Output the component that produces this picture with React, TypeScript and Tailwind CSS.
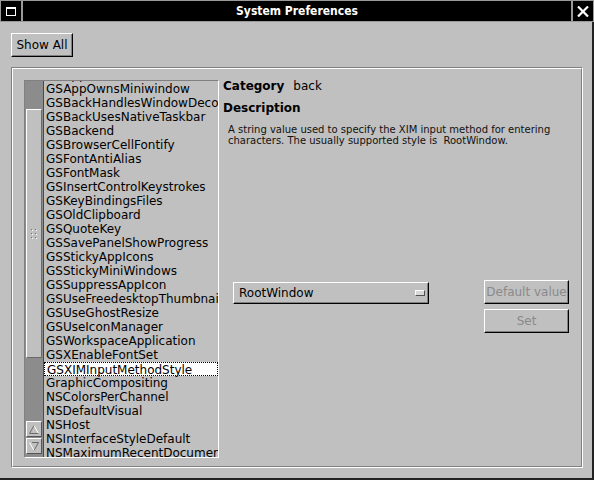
import React from 'react';

const keys = [
  'GSAppKitUserBundles',
  'GSAppOwnsMiniwindow',
  'GSBackHandlesWindowDecorations',
  'GSBackUsesNativeTaskbar',
  'GSBackend',
  'GSBrowserCellFontify',
  'GSFontAntiAlias',
  'GSFontMask',
  'GSInsertControlKeystrokes',
  'GSKeyBindingsFiles',
  'GSOldClipboard',
  'GSQuoteKey',
  'GSSavePanelShowProgress',
  'GSStickyAppIcons',
  'GSStickyMiniWindows',
  'GSSuppressAppIcon',
  'GSUseFreedesktopThumbnails',
  'GSUseGhostResize',
  'GSUseIconManager',
  'GSWorkspaceApplication',
  'GSXEnableFontSet',
  'GSXIMInputMethodStyle',
  'GraphicCompositing',
  'NSColorsPerChannel',
  'NSDefaultVisual',
  'NSHost',
  'NSInterfaceStyleDefault',
  'NSMaximumRecentDocumentCount',
];

const selected = 'GSXIMInputMethodStyle';

function Bezel({ children, className }: { children: React.ReactNode; className?: string }) {
  return (
    <div
      className={`flex items-center justify-center border border-t-white border-l-white border-b-black border-r-black bg-[#c0c0c0] shadow-[inset_-1px_-1px_0_#808080] ${className ?? ''}`}
    >
      {children}
    </div>
  );
}

function TitleBar() {
  return (
    <div className="flex h-[22px] bg-black">
      <div className="flex h-[22px] w-[22px] items-center justify-center border border-[#9a9a9a]">
        <div className="h-[9px] w-[10px] border border-t-2 border-white" />
      </div>
      <div className="flex flex-1 items-center justify-center border border-[#9a9a9a] font-['DejaVu_Sans_Condensed','DejaVu_Sans',sans-serif] text-[12px] font-bold text-white">
        System Preferences
      </div>
      <div className="flex h-[22px] w-[22px] items-center justify-center border border-[#9a9a9a]">
        <svg width="12" height="11" viewBox="0 0 12 11">
          <path d="M1 0.5 L11 10.5 M11 0.5 L1 10.5" stroke="white" strokeWidth="2.2" />
        </svg>
      </div>
    </div>
  );
}

function Scroller() {
  return (
    <div className="flex h-full w-[18px] flex-col bg-[#8c8c8c]">
      <div className="h-[28px]" />
      <div className="mx-[1px] flex h-[249px] items-center justify-center border border-t-white border-l-white border-b-[#6a6a6a] border-r-[#6a6a6a] bg-[#c0c0c0]">
        <svg width="7" height="10" viewBox="0 0 7 10">
          {[0, 4].map((x) =>
            [0, 4, 8].map((y) => (
              <g key={`${x}-${y}`}>
                <rect x={x} y={y} width="1" height="1" fill="#707070" />
                <rect x={x + 1} y={y + 1} width="1" height="1" fill="#ffffff" />
              </g>
            )),
          )}
        </svg>
      </div>
      <div className="h-[63px]" />
      <div className="mx-[1px] flex h-[16px] items-center justify-center border border-t-white border-l-white border-b-[#555] border-r-[#555] bg-[#c0c0c0]">
        <svg width="10" height="9" viewBox="0 0 10 9">
          <path d="M5 0.5 L9.5 8.5" stroke="#ffffff" strokeWidth="1" fill="none" />
          <path d="M5 0.5 L0.5 8.5 L9.5 8.5" stroke="#6a6a6a" strokeWidth="1" fill="none" />
        </svg>
      </div>
      <div className="h-[1px]" />
      <div className="mx-[1px] flex h-[16px] items-center justify-center border border-t-white border-l-white border-b-[#555] border-r-[#555] bg-[#c0c0c0]">
        <svg width="10" height="9" viewBox="0 0 10 9">
          <path d="M0.5 0.5 L5 8.5" stroke="#ffffff" strokeWidth="1" fill="none" />
          <path d="M3 0.5 L9.5 0.5 L5 8.5" stroke="#6a6a6a" strokeWidth="1" fill="none" />
        </svg>
      </div>
    </div>
  );
}

function KeyList() {
  return (
    <div className="mt-[11px] flex h-[378px] w-[195px] border border-t-[#808080] border-l-[#808080] border-b-white border-r-white">
      <Scroller />
      <div className="w-[1px] bg-[#4a4a4a]" />
      <div className="flex-1 overflow-hidden">
        <div className="-mt-[13px]">
          {keys.map((key) => (
            <div
              key={key}
              className={`h-[14px] whitespace-nowrap pl-[2px] text-[12px] leading-[15px] text-black ${
                key === selected ? 'border border-dotted border-black bg-white pl-[1px] leading-[13px]' : ''
              }`}
            >
              {key}
            </div>
          ))}
        </div>
      </div>
    </div>
  );
}

function Details() {
  return (
    <div className="ml-[4px] flex flex-1 flex-col pt-[10px] text-black">
      <div className="flex h-[15px] items-center text-[12px] leading-[15px]">
        <span className="font-bold">Category</span>
        <span className="ml-[9px]">back</span>
      </div>
      <div className="mt-[7px] h-[15px] text-[12px] font-bold leading-[15px]">Description</div>
      <div className="mt-[8px] ml-[5px] whitespace-pre text-[10px] leading-[11px] text-[#111]">
        {'A string value used to specify the XIM input method for entering\ncharacters. The usually supported style is  RootWindow.'}
      </div>
      <div className="mt-[134px] flex">
        <div className="mt-[2px] ml-[10px] flex h-[22px] w-[196px] items-center justify-between border border-t-white border-l-white border-b-black border-r-black bg-[#c0c0c0] pl-[5px] pr-[3px] text-[12px] shadow-[inset_-1px_-1px_0_#808080]">
          <span>RootWindow</span>
          <div className="h-[6px] w-[10px] border border-t-white border-l-white border-b-[#505050] border-r-[#505050] bg-[#d8d8d8]" />
        </div>
        <div className="ml-[55px] flex flex-col gap-[5px]">
          <Bezel className="h-[24px] w-[85px] text-[12px] text-[#8a8a8a]">Default value</Bezel>
          <Bezel className="h-[24px] w-[85px] text-[12px] text-[#8a8a8a]">Set</Bezel>
        </div>
      </div>
    </div>
  );
}

export default function App() {
  return (
    <div className="flex h-[480px] w-[594px] flex-col overflow-hidden bg-[#c0c0c0] font-['DejaVu_Sans',sans-serif]">
      <TitleBar />
      <div className="flex-1 border-b-2 border-r-2 border-[#222] pl-[11px] pt-[11px]">
        <Bezel className="h-[24px] w-[62px] text-[12px] text-black">Show All</Bezel>
        <div className="mt-[10px] h-[401px] w-[572px] border border-t-[#808080] border-l-[#808080] border-b-white border-r-white">
          <div className="flex h-full border border-t-white border-l-white border-b-[#808080] border-r-[#808080] pl-[11px]">
            <KeyList />
            <Details />
          </div>
        </div>
      </div>
    </div>
  );
}
